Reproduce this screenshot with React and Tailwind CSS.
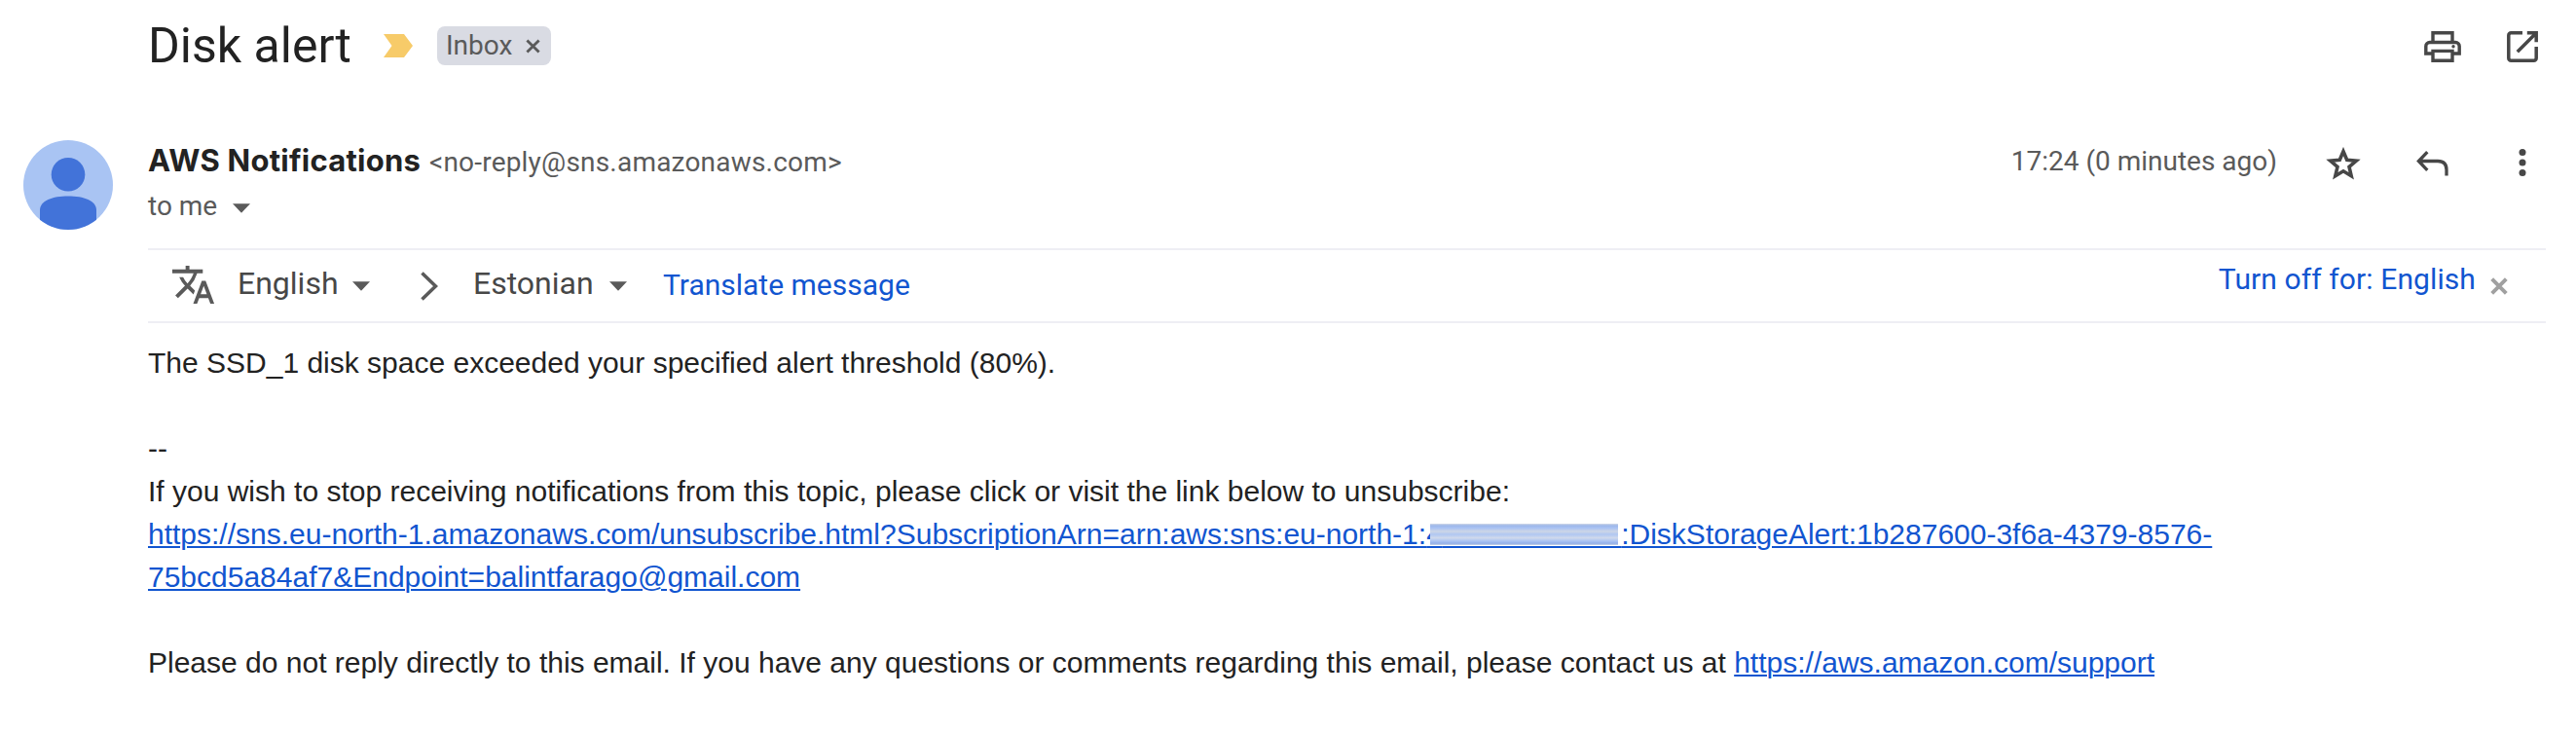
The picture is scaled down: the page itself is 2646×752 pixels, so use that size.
import { MdTranslate } from "react-icons/md";

const hiddenDigits = "\u00a0".repeat(22);

function Caret({ className }) {
  return (
    <svg viewBox="0 0 18 10" className={`h-2.5 w-[18px] shrink-0 ${className}`} fill="#5a5a5a">
      <path d="M0 0.3h18l-9 9.4z" />
    </svg>
  );
}

function Cross({ className, size, width }) {
  return (
    <svg viewBox="0 0 16 16" width={size} height={size} className={`shrink-0 ${className}`} fill="none" stroke="currentColor" strokeWidth={width}>
      <path d="M1.5 1.5l13 13M14.5 1.5l-13 13" />
    </svg>
  );
}

function PrintIcon() {
  return (
    <svg viewBox="0 0 38 32" className="h-8 w-[38px]" fill="none" stroke="#474747" strokeWidth="3.4">
      <path d="M9 10.5V1.7h20v8.8" />
      <path d="M9 23H1.8v-7.5a4 4 0 0 1 4-4h26.4a4 4 0 0 1 4 4V23H29" />
      <path d="M9 20.4h20v9.9H9z" />
      <circle cx="30" cy="15.8" r="1.7" fill="#474747" stroke="none" />
    </svg>
  );
}

function OpenIcon() {
  return (
    <svg viewBox="0 0 32 32" className="size-8" fill="none" stroke="#474747" strokeWidth="3.5">
      <path d="M16 1.8H4.3a2.5 2.5 0 0 0-2.5 2.5v23.4a2.5 2.5 0 0 0 2.5 2.5h23.4a2.5 2.5 0 0 0 2.5-2.5V16" />
      <path d="M20.8 1.8h9.400v9.400M29.500 2.500L10.800 21.200" />
    </svg>
  );
}

function StarIcon() {
  return (
    <svg viewBox="0 0 36 34" className="mt-1 ml-[50px] h-[34px] w-9" fill="none" stroke="#474747" strokeWidth="3.600">
      <path d="M18 4.500l3.700 8.800 9.600.8-7.300 6.300 2.200 9.300L18 24.800l-8.200 4.900L12 20.400l-7.300-6.300 9.600-.8z" />
    </svg>
  );
}

function Avatar() {
  return (
    <svg viewBox="0 0 92 92" className="size-[92px] shrink-0">
      <defs>
        <clipPath id="avatar-round">
          <circle cx="46" cy="46" r="46" />
        </clipPath>
      </defs>
      <g clipPath="url(#avatar-round)">
        <rect width="92" height="92" fill="#a9c4f3" />
        <circle cx="46" cy="35.3" r="17.3" fill="#4273d9" />
        <path d="M17 92V72c0-10 13-14.500 29-14.500S75 62 75 72v20z" fill="#4273d9" />
      </g>
    </svg>
  );
}

function Link({ children }) {
  return <a className="text-[#1155d0] underline decoration-2 underline-offset-[2px]">{children}</a>;
}

export default function App() {
  return (
    <main className="h-[752px] w-[2646px] overflow-hidden bg-white font-[Roboto,sans-serif] text-[#222222]">
      <header className="flex h-[94px] items-center pr-[39px] pl-[152px]">
        <h1 className="text-[50px]">Disk alert</h1>
        <svg viewBox="0 0 30 24" className="ml-[33px] h-6 w-[30px]" fill="#f7cb69">
          <path d="M0 0h21l9 12-9 12H0l8.500-12z" />
        </svg>
        <div className="ml-[25px] flex h-10 w-[117px] items-center rounded-lg bg-[#d9dbe3] pl-[9px] text-[28px] text-[#5a5a5a]">
          <span className="w-[82px]">Inbox</span>
          <Cross size={15} width={3} />
        </div>
        <div className="mt-0.5 ml-auto flex items-center gap-[47px]">
          <PrintIcon />
          <OpenIcon />
        </div>
      </header>

      <section className="mt-[50px] flex h-[92px] pr-[51px] pl-6">
        <Avatar />
        <div className="ml-9 grow text-[28px] text-[#5a5a5a]">
          <div className="flex h-11 items-center">
            <div className="flex items-baseline leading-[44px]">
              <span className="w-[289px] font-[Inter] text-[31px] font-bold tracking-[0.25px] whitespace-nowrap text-[#222222]">AWS Notifications</span>
              <span className="tracking-[0.2px]">&lt;no-reply@sns.amazonaws.com&gt;</span>
            </div>
            <span className="ml-auto">17:24 (0 minutes ago)</span>
            <StarIcon />
            <svg viewBox="0 0 34 28" className="mt-1 ml-[57px] h-7 w-[34px]" fill="none" stroke="#474747" strokeWidth="3.3">
              <path d="M11.3 2.200L2.400 11.500l8.900 9.300M2.400 11.500H22q9 0 9 9v6" />
            </svg>
            <svg viewBox="0 0 8 28" className="mt-0.5 ml-[71px] h-7 w-2" fill="#474747">
              <circle cx="4" cy="3.5" r="3.5" />
              <circle cx="4" cy="14" r="3.5" />
              <circle cx="4" cy="24.5" r="3.5" />
            </svg>
          </div>
          <div className="flex h-12 items-center">
            <span>to me</span>
            <Caret className="mt-1 ml-4" />
          </div>
        </div>
      </section>

      <section className="mt-[19px] mr-[31px] ml-[152px] flex h-[77px] items-center border-y-2 border-[#eeeef4] pb-1.5 text-[32px] text-[#474747]">
        <MdTranslate className="mt-[3px] ml-[23px] size-[47px] text-[#5a5a5a]" />
        <span className="ml-[22px] w-[118px]">English</span>
        <Caret className="mt-1.5" />
        <svg viewBox="0 0 18 30" className="mt-1.5 ml-[52px] h-[30px] w-[18px]" fill="none" stroke="#5a5a5a" strokeWidth="3.6">
          <path d="M1.5 1.5L15.5 15l-14 13.5" />
        </svg>
        <span className="ml-9 w-[140px]">Estonian</span>
        <Caret className="mt-1.5" />
        <a className="mt-[3px] ml-[37px] text-[30px] text-[#1155d0]">Translate message</a>
        <a className="mb-[9px] ml-auto text-[30px] tracking-[0.1px] text-[#1155d0]">Turn off for: English</a>
        <Cross size={18} width={3.5} className="mt-1.5 mr-[39px] ml-[15px] text-[#a0a0a0]" />
      </section>

      <article className="mt-[19px] ml-[152px] font-['Liberation_Sans',Arial,sans-serif] text-[30px] leading-[44px] whitespace-nowrap">
        <p>The SSD_1 disk space exceeded your specified alert threshold (80%).</p>
        <p className="mt-11">--</p>
        <p>If you wish to stop receiving notifications from this topic, please click or visit the link below to unsubscribe:</p>
        <p>
          <Link>
            https://sns.eu-north-1.amazonaws.com/unsubscribe.html?SubscriptionArn=arn:aws:sns:eu-north-1:
            <span className="relative">
              4{hiddenDigits}
              <span className="absolute top-[6px] left-1 h-[22px] w-[193px] bg-[linear-gradient(to_bottom,#d3d9e6_0%,#9db7ea_9%,#a9c2f3_20%,#cdd6e6_36%,#b0c7f2_50%,#cfd9ec_66%,#a9c2f3_82%,#93afe8_92%,#cbd5e6_100%)]" />
            </span>
            :DiskStorageAlert:1b287600-3f6a-4379-8576-
            <br />
            75bcd5a84af7&amp;Endpoint=balintfarago@gmail.com
          </Link>
        </p>
        <p className="mt-11">
          Please do not reply directly to this email. If you have any questions or comments regarding this email, please contact us at{" "}
          <Link>https://aws.amazon.com/support</Link>
        </p>
      </article>
    </main>
  );
}
